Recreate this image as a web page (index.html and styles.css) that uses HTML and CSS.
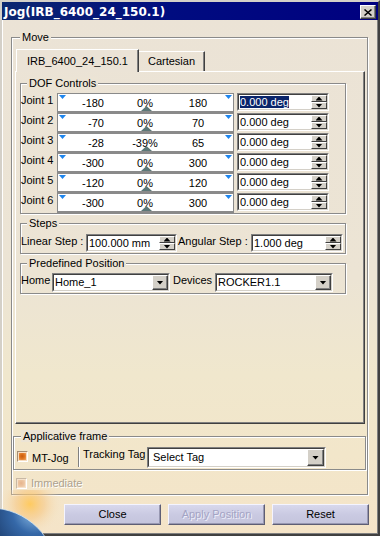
FILE: index.html
```html
<!DOCTYPE html>
<html lang="en">
<head>
<meta charset="utf-8">
<title>Jog</title>
<link rel="stylesheet" href="styles.css">
</head>
<body>
<div class="window">
  <div class="titlebar">
    <span class="title">Jog(IRB_6400_24_150.1)</span>
    <span class="close-btn"><svg width="8" height="7" viewBox="0 0 8 7"><path d="M0.5 0.5 L7.5 6.5 M7.5 0.5 L0.5 6.5" stroke="#000" stroke-width="1.5"/></svg></span>
  </div>
  <div class="client">
    <fieldset class="group move">
      <legend>Move</legend>
      <div class="tabs">
        <div class="tab active">IRB_6400_24_150.1</div>
        <div class="tab inactive">Cartesian</div>
      </div>
      <div class="tabpane">
        <fieldset class="group dof">
          <legend>DOF Controls</legend>
          <div class="joint">
            <span class="jlabel">Joint 1</span>
            <div class="slider"><i class="tri tl"></i><i class="tri tr"></i><span class="min">-180</span><span class="pct">0%</span><span class="max">180</span><i class="thumb"></i></div>
            <div class="field jfield"><div class="field-in"><span class="val"><span class="sel">0.000 deg</span></span><span class="spinner"><span class="sb up"></span><span class="sb down"></span></span></div></div>
          </div>
          <div class="joint">
            <span class="jlabel">Joint 2</span>
            <div class="slider"><i class="tri tl"></i><i class="tri tr"></i><span class="min">-70</span><span class="pct">0%</span><span class="max">70</span><i class="thumb"></i></div>
            <div class="field jfield"><div class="field-in"><span class="val">0.000 deg</span><span class="spinner"><span class="sb up"></span><span class="sb down"></span></span></div></div>
          </div>
          <div class="joint">
            <span class="jlabel">Joint 3</span>
            <div class="slider"><i class="tri tl"></i><i class="tri tr"></i><span class="min">-28</span><span class="pct">-39%</span><span class="max">65</span><i class="thumb"></i></div>
            <div class="field jfield"><div class="field-in"><span class="val">0.000 deg</span><span class="spinner"><span class="sb up"></span><span class="sb down"></span></span></div></div>
          </div>
          <div class="joint">
            <span class="jlabel">Joint 4</span>
            <div class="slider"><i class="tri tl"></i><i class="tri tr"></i><span class="min">-300</span><span class="pct">0%</span><span class="max">300</span><i class="thumb"></i></div>
            <div class="field jfield"><div class="field-in"><span class="val">0.000 deg</span><span class="spinner"><span class="sb up"></span><span class="sb down"></span></span></div></div>
          </div>
          <div class="joint">
            <span class="jlabel">Joint 5</span>
            <div class="slider"><i class="tri tl"></i><i class="tri tr"></i><span class="min">-120</span><span class="pct">0%</span><span class="max">120</span><i class="thumb"></i></div>
            <div class="field jfield"><div class="field-in"><span class="val">0.000 deg</span><span class="spinner"><span class="sb up"></span><span class="sb down"></span></span></div></div>
          </div>
          <div class="joint">
            <span class="jlabel">Joint 6</span>
            <div class="slider"><i class="tri tl"></i><i class="tri tr"></i><span class="min">-300</span><span class="pct">0%</span><span class="max">300</span><i class="thumb"></i></div>
            <div class="field jfield"><div class="field-in"><span class="val">0.000 deg</span><span class="spinner"><span class="sb up"></span><span class="sb down"></span></span></div></div>
          </div>
        </fieldset>

        <fieldset class="group steps">
          <legend>Steps</legend>
          <div class="row">
            <span class="lbl lbl-linear">Linear Step :</span>
            <div class="field w-linear"><div class="field-in"><span class="val">100.000 mm</span><span class="spinner"><span class="sb up"></span><span class="sb down"></span></span></div></div>
            <span class="lbl lbl-angular">Angular Step :</span>
            <div class="field w-angular"><div class="field-in"><span class="val">1.000 deg</span><span class="spinner"><span class="sb up"></span><span class="sb down"></span></span></div></div>
          </div>
        </fieldset>

        <fieldset class="group predef">
          <legend>Predefined Position</legend>
          <div class="row">
            <span class="lbl lbl-home">Home</span>
            <div class="combo"><div class="combo-in"><span class="cval">Home_1</span><span class="drop"></span></div></div>
            <span class="lbl lbl-dev">Devices</span>
            <div class="combo"><div class="combo-in"><span class="cval">ROCKER1.1</span><span class="drop"></span></div></div>
          </div>
        </fieldset>
      </div>

      <fieldset class="group applic">
        <legend>Applicative frame</legend>
        <div class="row">
          <span class="cb checked"></span>
          <span class="lbl lbl-mt">MT-Jog</span>
          <span class="vsep"></span>
          <span class="lbl lbl-track">Tracking Tag</span>
          <div class="combo combo-tag"><div class="combo-in"><span class="cval">Select Tag</span><span class="drop"></span></div></div>
        </div>
      </fieldset>
      <div class="immediate">
        <span class="cb disabled"></span>
        <span class="lbl-dis">Immediate</span>
      </div>
    </fieldset>

    <div class="buttons">
      <div class="btn">Close</div>
      <div class="btn disabled">Apply Position</div>
      <div class="btn">Reset</div>
    </div>
  </div>

  <svg class="planet" width="62" height="46" viewBox="0 0 62 46">
    <defs>
      <radialGradient id="glow" cx="30" cy="14" r="32" gradientUnits="userSpaceOnUse">
        <stop offset="0" stop-color="#ffc95a" stop-opacity="0.95"/>
        <stop offset="0.45" stop-color="#f7c680" stop-opacity="0.55"/>
        <stop offset="1" stop-color="#f4e4c8" stop-opacity="0"/>
      </radialGradient>
      <radialGradient id="earth" cx="34" cy="22" r="72" gradientUnits="userSpaceOnUse">
        <stop offset="0" stop-color="#8cbce6"/>
        <stop offset="0.3" stop-color="#3568a8"/>
        <stop offset="1" stop-color="#081636"/>
      </radialGradient>
    </defs>
    <rect width="62" height="46" fill="url(#glow)"/>
    <circle cx="-10" cy="85" r="67" fill="url(#earth)"/>
    <circle cx="-10" cy="85" r="67" fill="none" stroke="#d8ecfa" stroke-width="1" opacity="0.75"/>
  </svg>
</div>
</body>
</html>
```

FILE: styles.css
```css
* { box-sizing: border-box; }
html, body { margin: 0; padding: 0; }
body {
  width: 380px;
  height: 536px;
  overflow: hidden;
  font-family: "Liberation Sans", Arial, sans-serif;
  font-size: 11px;
  color: #000;
  background: #ece4d4;
}

.window {
  position: relative;
  width: 380px;
  height: 536px;
  border: 2px solid;
  border-color: #d4d0c8 #404040 #404040 #d4d0c8;
  box-shadow: inset 1px 1px 0 #fff, inset -1px -1px 0 #808080;
  background: linear-gradient(to bottom, #ebe3d6 0, #ece4d4 52%, #f0e7cd 70%, #f2e6ca 85%, #f5e4c8 100%);
  display: flex;
  flex-direction: column;
}

/* title bar */
.titlebar {
  height: 18px;
  flex: none;
  background: linear-gradient(to right, #0c2870 0, #000c80 45%, #000080 100%);
  display: flex;
  justify-content: space-between;
  align-items: flex-start;
  overflow: hidden;
}
.title {
  color: #fff;
  font-family: "DejaVu Sans", Verdana, sans-serif;
  font-weight: bold;
  font-size: 12px;
  line-height: 21px;
  padding-left: 2px;
  white-space: nowrap;
}
.close-btn {
  width: 16px;
  height: 14px;
  margin: 3px 2px 0 0;
  background: #d4d0c8;
  border: 1px solid;
  border-color: #fff #404040 #404040 #fff;
  box-shadow: inset -1px -1px 0 #808080;
  display: flex;
  align-items: center;
  justify-content: center;
}
.close-btn svg { display: block; }

.client {
  flex: 1;
  padding: 0 9px;
  display: flex;
  flex-direction: column;
}

/* group boxes */
fieldset.group {
  margin: 0;
  min-width: 0;
  border: 1px solid #8a8a8a;
  box-shadow: inset 1px 1px 0 #fff, 1px 1px 0 #fff;
}
fieldset.group > legend {
  padding: 0 2px;
  height: 12px;
  line-height: 12px;
  background: #ece4d5;
  white-space: nowrap;
}

.move {
  margin-top: 11px !important;
  margin-right: 1px !important;
  padding: 6px 1px 5px 1px;
}
.move > legend { margin-left: 7px; }

/* tabs */
.tabs {
  display: flex;
  align-items: flex-end;
  height: 22px;
  margin-left: 3px;
  position: relative;
  z-index: 1;
}
.tab {
  text-align: center;
  line-height: 13px;
  border-top: 1px solid #fff;
  border-left: 1px solid #fff;
  border-right: 1px solid #404040;
  box-shadow: inset -1px 0 0 #808080;
  white-space: nowrap;
}
.tab.active {
  width: 123px;
  height: 23px;
  margin-bottom: -1px;
  padding-top: 5px;
  background: #ebe3d6;
}
.tab.inactive {
  width: 66px;
  height: 20px;
  padding-top: 3px;
  border-left: none;
}

.tabpane {
  height: 353px;
  margin: 0 1px 0 2px;
  border: 1px solid;
  border-color: #fff #404040 #404040 #fff;
  box-shadow: inset -1px -1px 0 #808080;
  padding: 0 18px 0 4px;
}

/* DOF */
.dof {
  margin-top: 5px !important;
  padding: 4px 0 0 0;
}
.dof > legend, .steps > legend, .predef > legend { margin-left: 6px; }

.joint {
  display: flex;
  align-items: flex-start;
  height: 20px;
}
.jlabel {
  width: 36px;
  flex: none;
  line-height: 13px;
  padding-top: 1px;
  white-space: nowrap;
}
.slider {
  position: relative;
  width: 177px;
  height: 20px;
  flex: none;
  background: #fff;
  border: 1px solid #8a8a8a;
  border-bottom-width: 2px;
  display: grid;
  grid-template-columns: 46px 82px 24px 1fr;
  padding-top: 3px;
  line-height: 13px;
  white-space: nowrap;
}
.slider .min { text-align: right; }
.slider .pct { text-align: center; }
.slider .max { text-align: center; }
.tri {
  position: absolute;
  top: 1px;
  width: 7px;
  height: 4px;
  background: #1f86ee;
  clip-path: polygon(0 0, 100% 0, 50% 100%);
}
.tri.tl { left: 1px; }
.tri.tr { right: 1px; }
.thumb {
  position: absolute;
  bottom: 0;
  left: 83px;
  width: 11px;
  height: 5px;
  background: #5c7777;
  clip-path: polygon(50% 0, 100% 100%, 0 100%);
}

/* fields */
.field {
  height: 18px;
  flex: none;
  border: 1px solid;
  border-color: #808080 #fff #fff #808080;
}
.field-in {
  height: 100%;
  border: 1px solid;
  border-color: #404040 #d4d0c8 #d4d0c8 #404040;
  background: #fff;
  display: flex;
}
.val {
  flex: 1;
  min-width: 0;
  padding-left: 1px;
  line-height: 14px;
  white-space: nowrap;
  overflow: hidden;
}
.sel {
  background: #0a246a;
  color: #fff;
}
.jfield { width: 92px; margin-left: 3px; }
.spinner {
  width: 16px;
  flex: none;
  display: flex;
  flex-direction: column;
}
.sb {
  flex: 1;
  background: #d4d0c8;
  border: 1px solid;
  border-color: #fff #404040 #404040 #fff;
  display: flex;
  align-items: center;
  justify-content: center;
}
.sb::after {
  content: "";
  width: 7px;
  height: 4px;
  background: #000;
}
.sb.up::after { clip-path: polygon(50% 0, 100% 100%, 0 100%); }
.sb.down::after { clip-path: polygon(0 0, 100% 0, 50% 100%); }

/* steps */
.steps {
  margin-top: 3px !important;
  padding: 5px 0 1px 0;
}
.row {
  display: flex;
  align-items: flex-start;
}
.lbl {
  flex: none;
  line-height: 13px;
  padding-top: 1px;
  white-space: nowrap;
}
.lbl-linear { width: 65px; }
.w-linear { width: 91px; }
.lbl-angular { width: 73px; margin-left: 1px; }
.w-angular { width: 92px; }

/* predefined */
.predef {
  margin-top: 3px !important;
  padding: 4px 0 1px 0;
}
.lbl-home { width: 31px; }
.lbl-dev { width: 42px; margin-left: 3px; }
.combo {
  width: 118px;
  height: 19px;
  flex: none;
  border: 1px solid;
  border-color: #808080 #fff #fff #808080;
}
.combo-in {
  height: 100%;
  border: 1px solid;
  border-color: #404040 #d4d0c8 #d4d0c8 #404040;
  background: #fff;
  display: flex;
}
.cval {
  flex: 1;
  min-width: 0;
  padding-left: 1px;
  line-height: 15px;
  white-space: nowrap;
  overflow: hidden;
}
.drop {
  width: 16px;
  flex: none;
  background: #d4d0c8;
  border: 1px solid;
  border-color: #fff #404040 #404040 #fff;
  box-shadow: inset -1px -1px 0 #808080;
  display: flex;
  align-items: center;
  justify-content: center;
}
.drop::after {
  content: "";
  width: 7px;
  height: 4px;
  background: #000;
  clip-path: polygon(0 0, 100% 0, 50% 100%);
}

/* applicative */
.applic {
  margin-top: 6px !important;
  padding: 5px 0 1px 3px;
}
.applic > legend {
  margin-left: 4px;
  background: #f1e6cb;
}
.applic .row { height: 21px; }
.cb {
  width: 11px;
  height: 11px;
  flex: none;
  border: 1px solid;
  border-color: #a48c74 #fff #fff #a48c74;
  background: #f6dcc0;
  padding: 1px;
}
.cb::after {
  content: "";
  display: block;
  width: 7px;
  height: 7px;
}
.cb.checked { margin-top: 4px; }
.cb.checked::after {
  background: radial-gradient(circle at 45% 45%, #c95a0e 0, #de7520 45%, #f2a86a 100%);
}
.lbl-mt {
  width: 46px;
  margin-left: 4px;
  padding-top: 5px;
}
.vsep {
  width: 2px;
  height: 20px;
  flex: none;
  border-left: 1px solid #808080;
  border-right: 1px solid #fff;
}
.lbl-track {
  width: 64px;
  margin-left: 3px;
  padding-top: 1px;
}
.combo-tag {
  width: 179px;
  height: 21px;
}
.combo-tag .cval {
  padding-left: 4px;
  line-height: 17px;
}
.combo-tag .drop { width: 17px; }

.immediate {
  display: flex;
  align-items: flex-start;
  height: 12px;
  margin-top: 7px;
  padding-left: 3px;
}
.cb.disabled { margin-top: 1px; background: #f5e2cc; border-color: #c8b8a4 #fff #fff #c8b8a4; }
.cb.disabled::after {
  background: radial-gradient(circle at 45% 45%, #e6b48c 0, #ecc4a0 55%, #f4d8bc 100%);
}
.lbl-dis {
  margin-left: 4px;
  line-height: 13px;
  color: #aca18f;
  text-shadow: 1px 1px 0 #fff;
  white-space: nowrap;
}

/* buttons */
.buttons {
  display: flex;
  justify-content: flex-end;
  gap: 7px;
  margin-top: 9px;
}
.btn {
  width: 97px;
  height: 21px;
  border: 1px solid;
  border-color: #f4f4ff #5e5e74 #5e5e74 #f4f4ff;
  box-shadow: inset -1px -1px 0 #9898b2;
  background: linear-gradient(to bottom, #d8d8ec 0, #cacae2 50%, #c4c4dc 100%);
  text-align: center;
  line-height: 19px;
  white-space: nowrap;
}
.btn.disabled {
  color: #a4a4c4;
  text-shadow: 1px 1px 0 #eeeefa;
}

/* decorative planet in the corner */
.planet {
  position: absolute;
  left: -2px;
  bottom: -2px;
  display: block;
}
```
